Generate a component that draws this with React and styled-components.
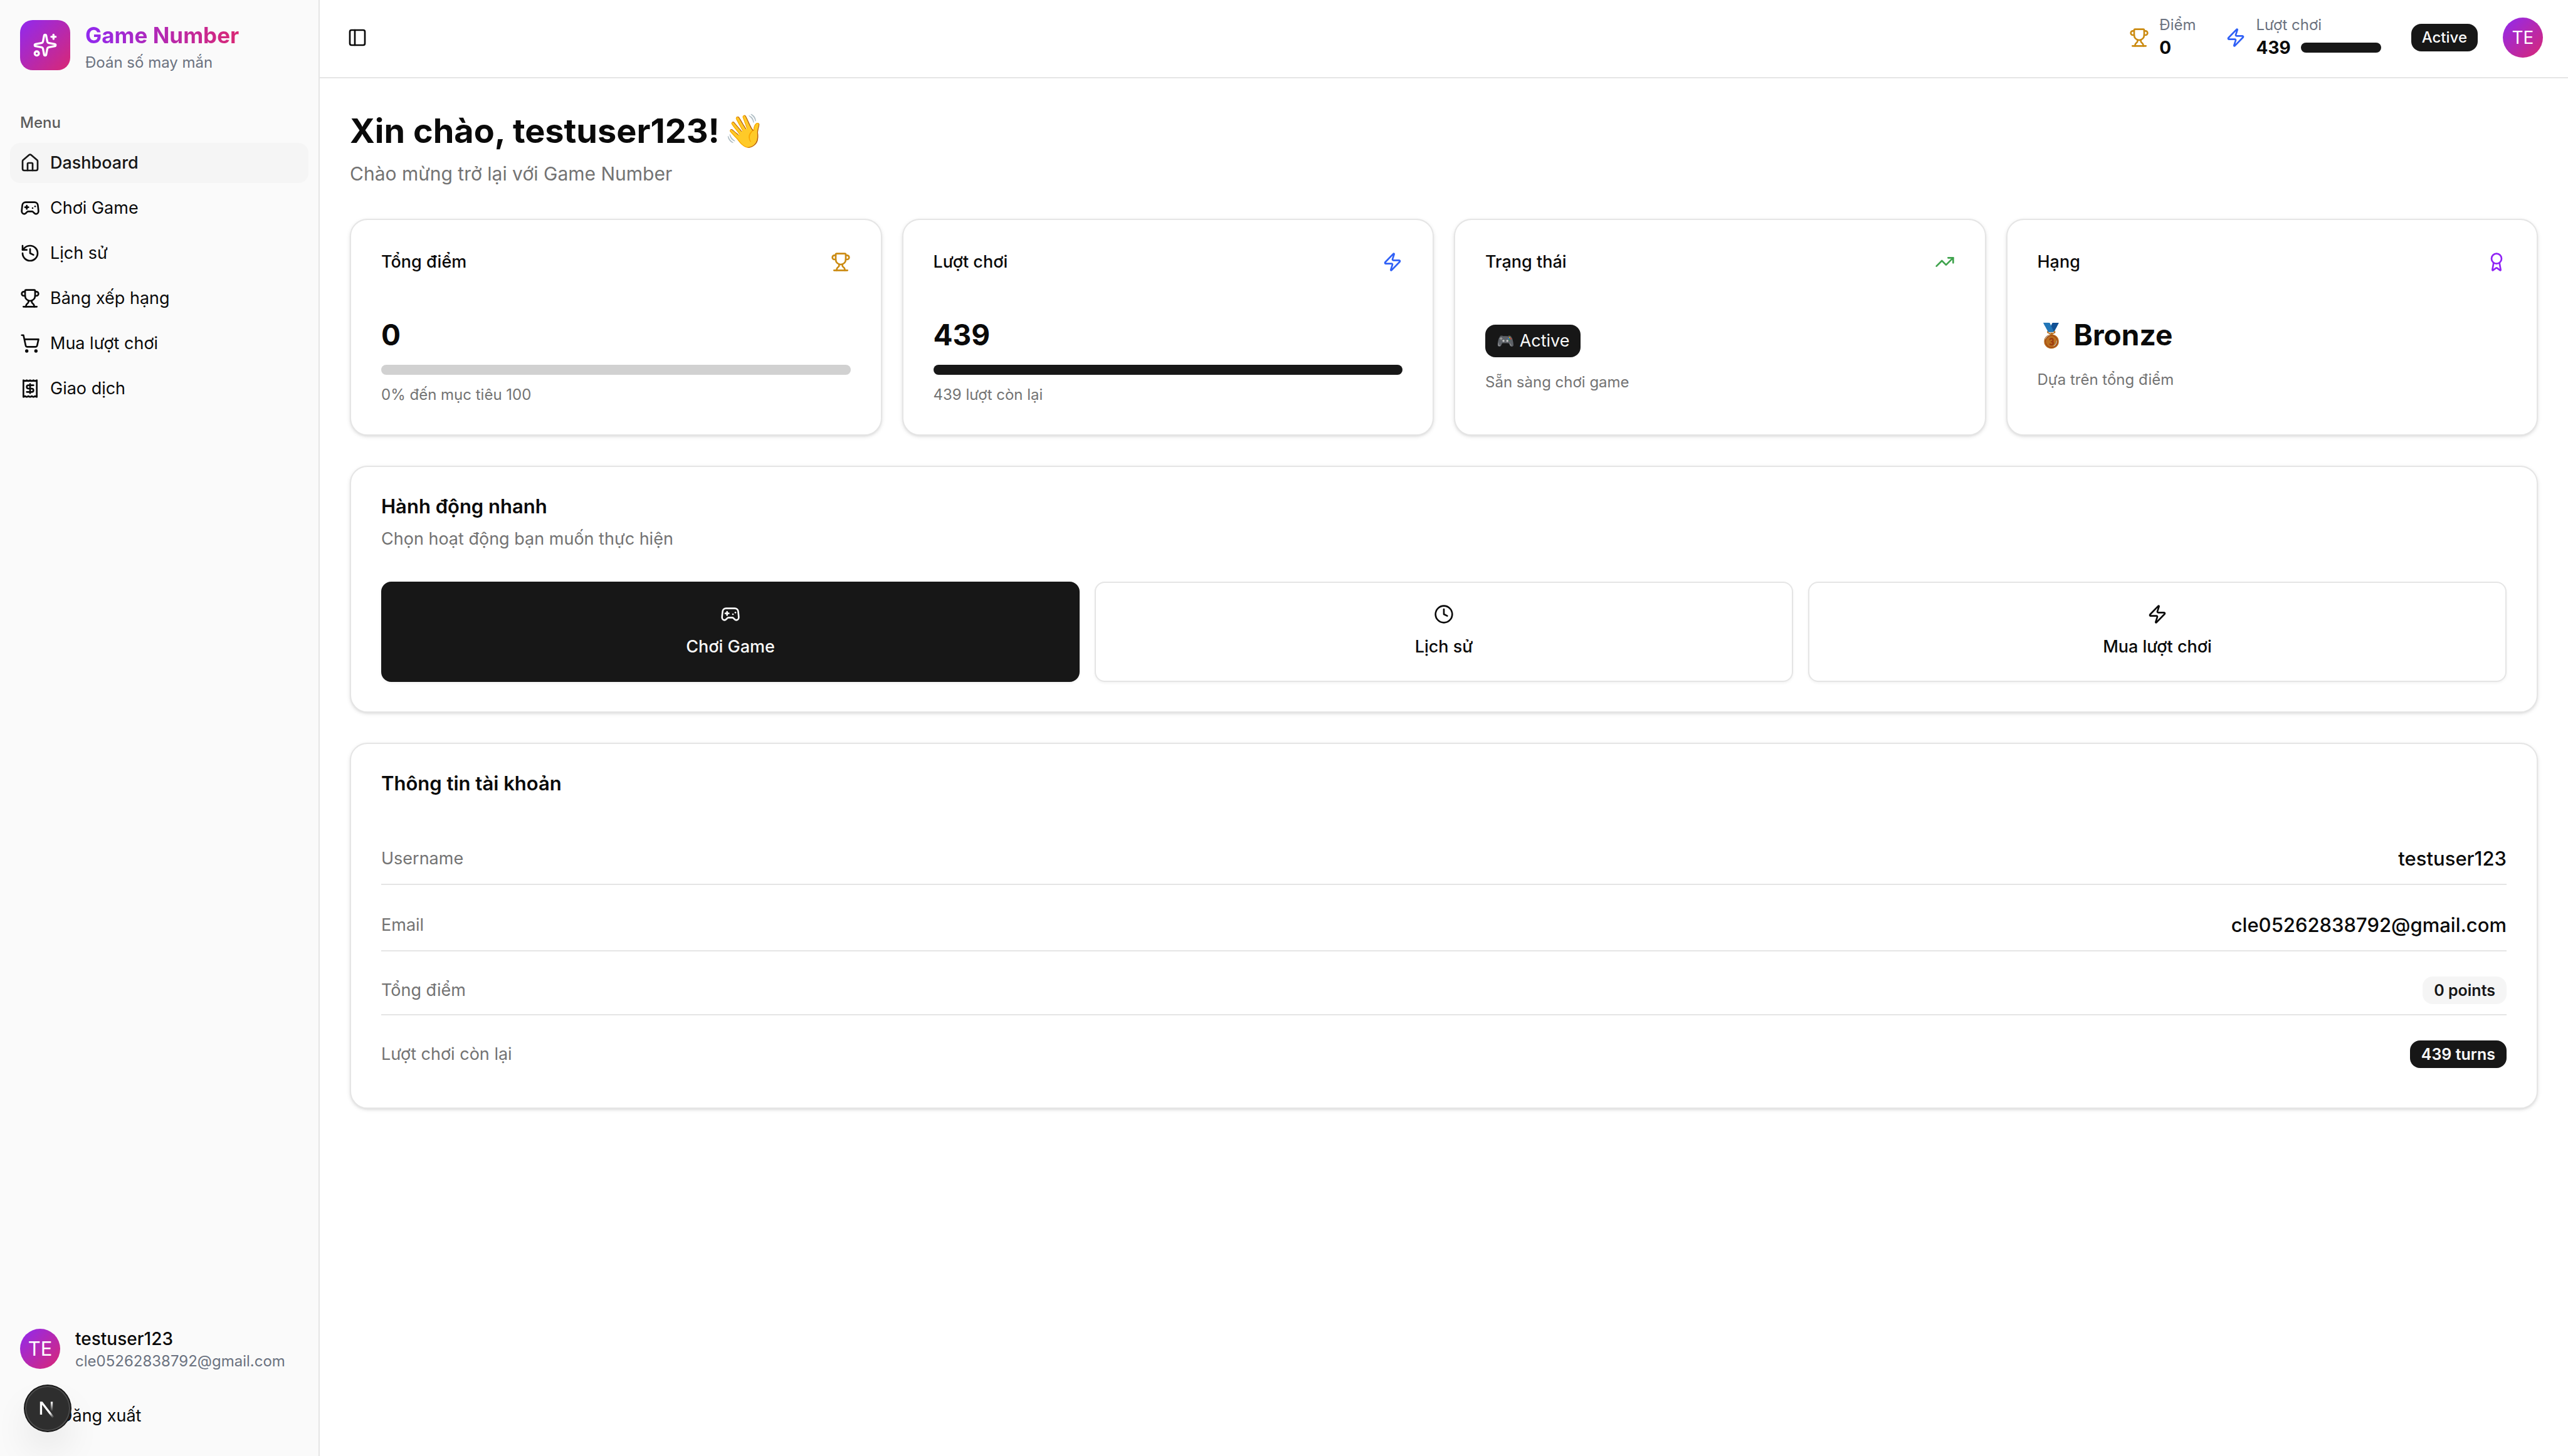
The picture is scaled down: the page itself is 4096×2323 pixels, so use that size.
import React from "react";
import styled, { createGlobalStyle, css } from "styled-components";
import {
  Award,
  Clock,
  Gamepad2,
  History,
  House,
  LogOut,
  PanelLeft,
  Receipt,
  ShoppingCart,
  Sparkles,
  TrendingUp,
  Trophy,
  Zap,
} from "lucide-react";

const color = {
  ink: "#0a0a0a",
  primary: "#171717",
  onPrimary: "#fafafa",
  muted: "#737373",
  slate: "#6b7280",
  border: "#e5e5e5",
  accent: "#f5f5f5",
  sidebar: "#fafafa",
  purple: "#9023f5",
  gold: "#cb8b12",
  blue: "#2f60f6",
  green: "#3fa34d",
};
const brandGradient = "#9029f0, #d92874";

const GlobalStyle = createGlobalStyle`
  *, *::before, *::after { box-sizing: border-box; }
  body {
    margin: 0;
    background: #ffffff;
    color: ${color.ink};
    font-family: Inter, "Noto Color Emoji", sans-serif;
    font-size: 27px;
    line-height: 40px;
  }
  h1, h2, h3, p, dl, dd, ul { margin: 0; padding: 0; }
  button { font: inherit; color: inherit; cursor: pointer; }
  svg { display: block; flex: none; }
`;

const Shell = styled.div`
  display: flex;
  min-height: 100vh;
`;

/* Sidebar */

const Sidebar = styled.aside`
  display: flex;
  flex-direction: column;
  flex: none;
  width: 510px;
  background: ${color.sidebar};
  border-right: 2px solid ${color.border};
`;

const Brand = styled.div`
  display: flex;
  align-items: center;
  gap: 24px;
  padding: 28px 32px;
`;

const BrandMark = styled.div`
  display: grid;
  place-items: center;
  width: 80px;
  height: 80px;
  border-radius: 20px;
  color: #ffffff;
  background: linear-gradient(to bottom right, ${brandGradient});
`;

const BrandName = styled.div`
  width: fit-content;
  font-size: 35px;
  line-height: 56px;
  font-weight: 700;
  color: transparent;
  background: linear-gradient(to right, ${brandGradient});
  background-clip: text;
  -webkit-background-clip: text;
`;

const Caption = styled.p`
  font-size: 24px;
  line-height: 32px;
  color: ${(p) => p.$tone || color.muted};
`;

const Menu = styled.nav`
  flex: 1;
  padding: 20px 16px;
`;

const MenuLabel = styled.div`
  padding: 0 16px;
  font-size: 24px;
  line-height: 64px;
  font-weight: 500;
  color: #5c5c5c;
`;

const MenuList = styled.ul`
  display: flex;
  flex-direction: column;
  gap: 8px;
  list-style: none;
`;

const MenuLink = styled.a`
  display: flex;
  align-items: center;
  gap: 16px;
  height: 64px;
  padding: 0 16px;
  border-radius: 16px;
  color: ${color.ink};
  text-decoration: none;
  ${(p) =>
    p.$active &&
    css`
      background: ${color.accent};
      color: ${color.primary};
      font-weight: 500;
    `}
`;

const SidebarFooter = styled.div`
  display: flex;
  flex-direction: column;
  gap: 39px;
  padding: 32px;
`;

const Account = styled.div`
  display: flex;
  align-items: center;
  gap: 24px;
`;

const Avatar = styled.div`
  display: grid;
  place-items: center;
  flex: none;
  width: 64px;
  height: 64px;
  border-radius: 50%;
  font-size: ${(p) => p.$size || 27}px;
  color: #ffffff;
  background: linear-gradient(to bottom right, ${brandGradient});
`;

const AccountName = styled.p`
  font-size: 28px;
  font-weight: 500;
`;

const LogoutButton = styled.button`
  display: flex;
  align-items: center;
  gap: 16px;
  height: 64px;
  padding: 0 16px;
  border: 0;
  background: none;
`;

/* Top bar */

const Main = styled.div`
  flex: 1;
  min-width: 0;
`;

const TopBar = styled.header`
  display: flex;
  align-items: center;
  justify-content: space-between;
  padding: 24px 40px 27px 32px;
  border-bottom: 2px solid ${color.border};
`;

const IconButton = styled.button`
  display: grid;
  place-items: center;
  width: 56px;
  height: 56px;
  padding: 0;
  border: 0;
  background: none;
`;

const TopStats = styled.div`
  display: flex;
  align-items: center;
  gap: 48px;
`;

const Stat = styled.div`
  display: flex;
  align-items: center;
  gap: 16px;
`;

const StatValue = styled.div`
  display: flex;
  align-items: center;
  gap: 16px;
  font-size: 28px;
  line-height: 40px;
  font-weight: 700;
`;

const StatusAndUser = styled.div`
  display: flex;
  align-items: center;
  gap: 40px;
`;

const Badge = styled.span`
  display: inline-flex;
  align-items: center;
  gap: 8px;
  padding: 6px ${(p) => (p.$size === 24 ? 17 : 18)}px;
  border-radius: 16px;
  font-size: ${(p) => p.$size || 25}px;
  line-height: ${(p) => (p.$tall ? 40 : 32)}px;
  font-weight: ${(p) => p.$weight || 600};
  background: ${(p) => (p.$secondary ? color.accent : color.primary)};
  color: ${(p) => (p.$secondary ? color.primary : color.onPrimary)};
`;

const Track = styled.div`
  width: ${(p) => p.$width || "100%"};
  height: 16px;
  overflow: hidden;
  border-radius: 8px;
  background: #d1d1d1;
`;

const Fill = styled.div`
  height: 100%;
  background: ${color.primary};
`;

/* Page */

const Page = styled.main`
  display: flex;
  flex-direction: column;
  gap: 48px;
  padding: 48px;
`;

const PageHeader = styled.div`
  display: flex;
  flex-direction: column;
  gap: 8px;
`;

const Heading = styled.h1`
  display: flex;
  align-items: center;
  gap: 8px;
  font-size: 54px;
  line-height: 72px;
  font-weight: 700;
`;

const Emoji = styled.span`
  font-size: ${(p) => p.$size}px;
  line-height: 1;
  filter: ${(p) => p.$filter || "none"};
`;

const Lead = styled.p`
  font-size: 30px;
  line-height: 48px;
  color: ${color.muted};
`;

const CardGrid = styled.div`
  display: grid;
  grid-template-columns: repeat(4, 1fr);
  gap: 32px;
`;

const Card = styled.section`
  padding: 47px 48px;
  border: 2px solid ${color.border};
  border-radius: 28px;
  background: #ffffff;
  box-shadow: 0 2px 6px rgba(0, 0, 0, 0.1), 0 2px 4px -2px rgba(0, 0, 0, 0.1);
`;

const CardTop = styled.div`
  display: flex;
  align-items: center;
  justify-content: space-between;
  margin-bottom: 64px;
`;

const CardLabel = styled.h3`
  font-size: 27px;
  line-height: 40px;
  font-weight: 500;
`;

const CardBody = styled.div`
  display: flex;
  flex-direction: column;
  align-items: flex-start;
  gap: ${(p) => (p.$loose ? 24 : 16)}px;
`;

const Figure = styled.div`
  display: flex;
  align-items: center;
  gap: 12px;
  font-size: 46px;
  line-height: 64px;
  font-weight: 700;
`;

const BadgeSlot = styled.div`
  display: flex;
  padding-top: 16px;
`;

const SectionTitle = styled.h2`
  font-size: 31px;
  line-height: 32px;
  font-weight: 600;
`;

const SectionText = styled.p`
  margin-top: 16px;
  color: ${color.muted};
`;

const Actions = styled.div`
  display: grid;
  grid-template-columns: repeat(3, 1fr);
  gap: 24px;
  margin-top: 48px;
`;

const ActionButton = styled.button`
  display: flex;
  flex-direction: column;
  align-items: center;
  justify-content: center;
  gap: 16px;
  height: 160px;
  border: 2px solid ${(p) => (p.$primary ? color.primary : color.border)};
  border-radius: 16px;
  font-weight: 500;
  background: ${(p) => (p.$primary ? color.primary : "#ffffff")};
  color: ${(p) => (p.$primary ? color.onPrimary : color.ink)};
  box-shadow: 0 2px 4px rgba(0, 0, 0, 0.05);
`;

const Details = styled.dl`
  display: flex;
  flex-direction: column;
  gap: 24px;
  margin-top: 64px;
`;

const DetailRow = styled.div`
  display: flex;
  align-items: center;
  justify-content: space-between;
  padding: 16px 0;
  border-bottom: 2px solid ${color.border};
  &:last-child {
    border-bottom: 0;
  }
`;

const DetailLabel = styled.dt`
  color: ${color.muted};
`;

const DetailValue = styled.dd`
  display: flex;
  font-size: 31px;
  line-height: 48px;
  font-weight: 500;
`;

/* Floating developer indicator */

const DevButton = styled.button`
  position: fixed;
  left: 40px;
  bottom: 40px;
  width: 72px;
  height: 72px;
  padding: 0;
  border: 0;
  border-radius: 50%;
  background: #2e2e2e;
  box-shadow: 0 0 0 2px #171717, inset 0 0 0 2px rgba(255, 255, 255, 0.14),
    0 32px 64px -16px rgba(0, 0, 0, 0.24);
`;

function NextMark() {
  return (
    <svg width="72" height="72" viewBox="0 0 40 40" fill="none" aria-hidden="true">
      <defs>
        <linearGradient id="diag" x1="9.96" y1="11.12" x2="15.48" y2="17.97" gradientUnits="userSpaceOnUse">
          <stop stopColor="#fff" />
          <stop offset="0.604" stopColor="#fff" stopOpacity="0" />
        </linearGradient>
        <linearGradient id="stem" x1="11.82" y1="1.4" x2="11.79" y2="9.63" gradientUnits="userSpaceOnUse">
          <stop stopColor="#fff" />
          <stop offset="1" stopColor="#fff" stopOpacity="0" />
        </linearGradient>
        <clipPath id="cap">
          <rect x="0" y="1" width="20" height="18" />
        </clipPath>
      </defs>
      <g transform="translate(11.8 13)" clipPath="url(#cap)">
        <path d="M13.3 15.2 L2.34 1 V12.6" stroke="url(#diag)" strokeWidth="1.86" />
        <path d="M11.825 1 V13.1" stroke="url(#stem)" strokeWidth="1.86" />
      </g>
    </svg>
  );
}

function Progress({ value, width, label }) {
  return (
    <Track $width={width} role="progressbar" aria-valuenow={value} aria-label={label}>
      <Fill style={{ width: `${value}%` }} />
    </Track>
  );
}

const menu = [
  { icon: House, label: "Dashboard", href: "#dashboard", active: true },
  { icon: Gamepad2, label: "Chơi Game", href: "#game" },
  { icon: History, label: "Lịch sử", href: "#history" },
  { icon: Trophy, label: "Bảng xếp hạng", href: "#leaderboard" },
  { icon: ShoppingCart, label: "Mua lượt chơi", href: "#buy" },
  { icon: Receipt, label: "Giao dịch", href: "#transactions" },
];

const actions = [
  { icon: Gamepad2, label: "Chơi Game", primary: true },
  { icon: Clock, label: "Lịch sử" },
  { icon: Zap, label: "Mua lượt chơi" },
];

function StatCard({ title, icon: Icon, tone, loose, children }) {
  return (
    <Card>
      <CardTop>
        <CardLabel>{title}</CardLabel>
        <Icon size={32} color={tone} />
      </CardTop>
      <CardBody $loose={loose}>{children}</CardBody>
    </Card>
  );
}

export default function App() {
  return (
    <>
      <GlobalStyle />
      <Shell>
        <Sidebar>
          <Brand>
            <BrandMark>
              <Sparkles size={40} />
            </BrandMark>
            <div>
              <BrandName>Game Number</BrandName>
              <Caption $tone={color.slate}>Đoán số may mắn</Caption>
            </div>
          </Brand>
          <Menu aria-label="Menu">
            <MenuLabel>Menu</MenuLabel>
            <MenuList>
              {menu.map(({ icon: Icon, label, href, active }) => (
                <li key={href}>
                  <MenuLink href={href} $active={active}>
                    <Icon size={32} />
                    {label}
                  </MenuLink>
                </li>
              ))}
            </MenuList>
          </Menu>
          <SidebarFooter>
            <Account>
              <Avatar $size={31}>TE</Avatar>
              <div>
                <AccountName>testuser123</AccountName>
                <Caption $tone={color.slate}>cle05262838792@gmail.com</Caption>
              </div>
            </Account>
            <LogoutButton type="button">
              <LogOut size={32} />
              Đăng xuất
            </LogoutButton>
          </SidebarFooter>
        </Sidebar>

        <Main>
          <TopBar>
            <IconButton type="button" aria-label="Toggle Sidebar">
              <PanelLeft size={32} />
            </IconButton>
            <TopStats>
              <Stat>
                <Trophy size={32} color={color.gold} />
                <div>
                  <Caption $tone={color.slate}>Điểm</Caption>
                  <StatValue>0</StatValue>
                </div>
              </Stat>
              <Stat>
                <Zap size={32} color={color.blue} />
                <div>
                  <Caption $tone={color.slate}>Lượt chơi</Caption>
                  <StatValue>
                    439
                    <Progress value={100} width="128px" label="Lượt chơi" />
                  </StatValue>
                </div>
              </Stat>
              <StatusAndUser>
                <Badge $size={24} $weight={500}>Active</Badge>
                <Avatar $size={28}>TE</Avatar>
              </StatusAndUser>
            </TopStats>
          </TopBar>

          <Page>
            <PageHeader>
              <Heading>
                Xin chào, testuser123! <Emoji $size={52}>👋</Emoji>
              </Heading>
              <Lead>Chào mừng trở lại với Game Number</Lead>
            </PageHeader>

            <CardGrid>
              <StatCard title="Tổng điểm" icon={Trophy} tone={color.gold}>
                <Figure>0</Figure>
                <Progress value={0} label="Tổng điểm" />
                <Caption>0% đến mục tiêu 100</Caption>
              </StatCard>
              <StatCard title="Lượt chơi" icon={Zap} tone={color.blue}>
                <Figure>439</Figure>
                <Progress value={100} label="Lượt chơi" />
                <Caption>439 lượt còn lại</Caption>
              </StatCard>
              <StatCard title="Trạng thái" icon={TrendingUp} tone={color.green} loose>
                <BadgeSlot>
                  <Badge $size={27} $weight={400} $tall>
                    <Emoji $size={23}>🎮</Emoji>
                    Active
                  </Badge>
                </BadgeSlot>
                <Caption>Sẵn sàng chơi game</Caption>
              </StatCard>
              <StatCard title="Hạng" icon={Award} tone={color.purple} loose>
                <Figure>
                  <Emoji $size={37} $filter="brightness(0.75)">🥉</Emoji>
                  Bronze
                </Figure>
                <Caption>Dựa trên tổng điểm</Caption>
              </StatCard>
            </CardGrid>

            <Card>
              <SectionTitle>Hành động nhanh</SectionTitle>
              <SectionText>Chọn hoạt động bạn muốn thực hiện</SectionText>
              <Actions>
                {actions.map(({ icon: Icon, label, primary }) => (
                  <ActionButton key={label} type="button" $primary={primary}>
                    <Icon size={32} />
                    {label}
                  </ActionButton>
                ))}
              </Actions>
            </Card>

            <Card>
              <SectionTitle>Thông tin tài khoản</SectionTitle>
              <Details>
                <DetailRow>
                  <DetailLabel>Username</DetailLabel>
                  <DetailValue>testuser123</DetailValue>
                </DetailRow>
                <DetailRow>
                  <DetailLabel>Email</DetailLabel>
                  <DetailValue>cle05262838792@gmail.com</DetailValue>
                </DetailRow>
                <DetailRow>
                  <DetailLabel>Tổng điểm</DetailLabel>
                  <DetailValue>
                    <Badge $secondary>0 points</Badge>
                  </DetailValue>
                </DetailRow>
                <DetailRow>
                  <DetailLabel>Lượt chơi còn lại</DetailLabel>
                  <DetailValue>
                    <Badge>439 turns</Badge>
                  </DetailValue>
                </DetailRow>
              </Details>
            </Card>
          </Page>
        </Main>
      </Shell>
      <DevButton type="button" aria-label="Open Next.js Dev Tools">
        <NextMark />
      </DevButton>
    </>
  );
}
